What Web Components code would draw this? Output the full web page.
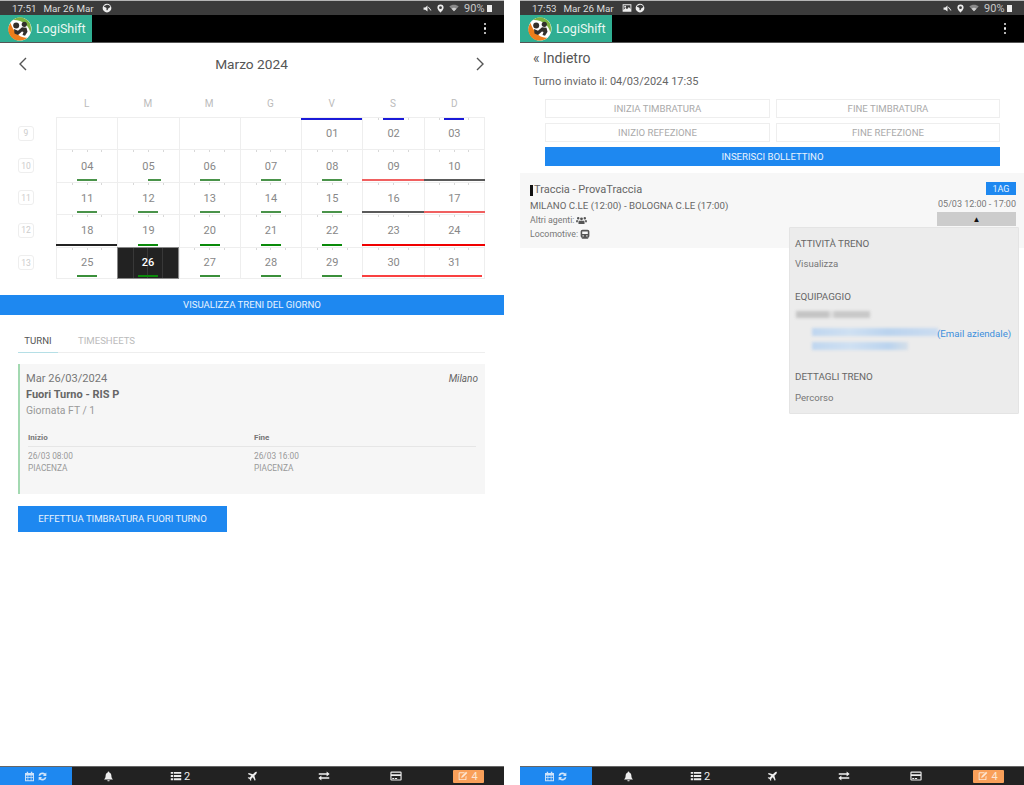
<!DOCTYPE html>
<html lang="it">
<head>
<meta charset="utf-8">
<title>LogiShift</title>
<style>
  html, body { margin: 0; height: 785px; overflow: hidden; background: #fff; }
  body { display: flex; gap: 16px; font-family: Roboto, "Liberation Sans", sans-serif; }
</style>
</head>
<body>
<tablet-screen time="17:51" date="Mar 26 Mar" style="--w:504px">
  <month-calendar></month-calendar>
  <wide-button kind="primary" style="--h:20px">VISUALIZZA TRENI DEL GIORNO</wide-button>
  <shift-tabs></shift-tabs>
  <shift-card></shift-card>
  <wide-button kind="primary" style="--h:26px;width:209px;margin:12px 0 0 18px">EFFETTUA TIMBRATURA FUORI TURNO</wide-button>
</tablet-screen>

<tablet-screen time="17:53" date="Mar 26 Mar" photo style="--w:504px">
  <turn-header></turn-header>
  <train-card>
    <span slot="title">Traccia - ProvaTraccia</span>
    <span slot="route">MILANO C.LE (12:00) - BOLOGNA C.LE (17:00)</span>
    <span slot="when">05/03 12:00 - 17:00</span>
  </train-card>
</tablet-screen>

<script>
const ICONS = {
  calendar: '<path fill-rule="evenodd" d="M4 1h2v2h4V1h2v2h2.5v12h-13V3H4zM3 6.5V9h2.2V6.5zm3.2 0V9h3.6V6.5zm4.6 0V9H13V6.5zM3 10v3.5h2.2V10zm3.2 0v3.5h3.6V10zm4.6 0v3.5H13V10z"/>',
  refresh: '<path d="M8 2.2a5.8 5.8 0 0 1 4 1.6l1.6-1.6v5h-5l1.7-1.7A3.4 3.4 0 0 0 4.7 7H2.3A5.8 5.8 0 0 1 8 2.2zM2.4 8.8h5l-1.7 1.7A3.4 3.4 0 0 0 11.3 9h2.4A5.8 5.8 0 0 1 4 12.2l-1.6 1.6z"/>',
  bell: '<path d="M8 .8a1.2 1.2 0 0 0-1.1 1.4C4.8 2.7 3.8 4.6 3.8 7c0 3-1 4.2-2.3 5.4h13C13.2 11.2 12.2 10 12.2 7c0-2.4-1-4.3-3.1-4.8A1.2 1.2 0 0 0 8 .8zM6.3 13.3a1.7 1.7 0 0 0 3.4 0z"/>',
  list: '<path d="M1 2.5h3V5H1zm4 0h10V5H5zM1 6.8h3v2.5H1zm4 0h10v2.5H5zM1 11h3v2.5H1zm4 0h10v2.5H5z"/>',
  plane: '<path d="M14.5 1.5c-1-.8-2.6 0-3.6 1L8.6 4.8 2.5 3 1.3 4.2l5 2.8-2.4 2.6-2-.4-.9.9 2.7 1.7 1.7 2.7.9-.9-.4-2 2.6-2.4 2.8 5 1.2-1.2-1.8-6.1 2.3-2.3c1-1 1.8-2.6 1-3.6z"/>',
  exchange: '<path d="M1 4.2h10.5V2l4 3.3-4 3.3V6.3H1zM15 9.7H4.5V7.4l-4 3.3 4 3.3v-2.2H15z"/>',
  card: '<path fill-rule="evenodd" d="M2 2h12a1.5 1.5 0 0 1 1.5 1.5v9A1.5 1.5 0 0 1 14 14H2a1.5 1.5 0 0 1-1.5-1.5v-9A1.5 1.5 0 0 1 2 2zm0 1.5v2h12v-2zM2 8v4.5h12V8zm1 2.8h2.5V12H3zm3.5 0h3V12h-3z"/>',
  edit: '<path fill-rule="evenodd" d="M3 2h8L9.5 3.5H3a.5.5 0 0 0-.5.5v8.500a.5.5 0 0 0 .5.5h8.500a.5.5 0 0 0 .5-.5V9l1.500-1.500V13a1.500 1.500 0 0 1-1.500 1.500H3A1.500 1.500 0 0 1 1 13V4a2 2 0 0 1 2-2zM13 1l2 2-7 7-3 1 1-3z"/>',
  users: '<path d="M8 3.5a2.1 2.1 0 1 1 0 4.2 2.1 2.1 0 0 1 0-4.2zM3.2 3a1.8 1.8 0 1 1 0 3.6 1.8 1.8 0 0 1 0-3.6zm9.6 0a1.8 1.8 0 1 1 0 3.6 1.8 1.8 0 0 1 0-3.6zM5 8.3h6c.9 0 1.4.8 1.4 1.7v3H3.6v-3c0-.9.5-1.7 1.4-1.7zM.2 7.5h3.200c-.5.6-.8 1.400-.8 2.300v.7H.2zm12.400 0h3.200v3h-2.400v-.7c0-.9-.3-1.700-.8-2.300z"/>',
  train: '<path fill-rule="evenodd" d="M4 1h8a3 3 0 0 1 3 3v7a3 3 0 0 1-3 3l1.5 1.5h-11L4 14a3 3 0 0 1-3-3V4a3 3 0 0 1 3-3zm-.5 3v4h9V4zM4 10v2h2v-2zm6 0v2h2v-2z"/>',
  mute: '<path d="M1 6h3l4-3.5v11L4 10H1zM10 5l5 6-1 1-5-6z"/>',
  pin: '<path fill-rule="evenodd" d="M8 1a5.5 5.5 0 0 1 5.5 5.5C13.5 10 8 15 8 15S2.5 10 2.5 6.5A5.5 5.5 0 0 1 8 1zm0 3a2.5 2.5 0 1 0 0 5 2.5 2.5 0 0 0 0-5z"/>',
  wifi: '<path d="M8 13 .5 5.5C4.5 1.8 11.5 1.8 15.5 5.5z" opacity=".55"/><path d="M8 13 4 9c2.3-2 5.7-2 8 0z"/>',
  photo: '<path fill-rule="evenodd" d="M1 2h14v12H1zm1.5 1.5V11l3-3.5L8 10l3-3.5 2.5 3v-6zM5 4.5a1.5 1.5 0 1 1 0 3 1.500 1.500 0 0 1 0-3z"/>',
  globe: '<path fill-rule="evenodd" d="M8 1a7 7 0 1 1 0 14A7 7 0 0 1 8 1zM3 5c1 2 3 1 4 3s-1 2 1 4c2-.5 1-3 3-4 1-.5 2-1 2.5-2C12 3 9 2 7 3 6 4 4 3.5 3 5z"/>'
};

function icon(name, size, color) {
  return `<svg viewBox="0 0 16 16" width="${size}" height="${size}" fill="${color || 'currentColor'}" style="display:block;flex:none">${ICONS[name]}</svg>`;
}

const LOGO = `<svg viewBox="0 0 24 24" width="24" height="24" style="display:block;flex:none">
  <circle cx="12" cy="12" r="11.5" fill="#fff"/>
  <path d="M2.5 6A11 11 0 0 0 12 23.5c3 0 5.5-1 7.5-3C12 22 5 14 2.5 6z" fill="#ee7d1b"/>
  <path d="M5 3A11 11 0 0 1 23 12c0 1.5-.3 2.5-.8 3.5C21.5 9 14 2.5 5 3z" fill="#7cb342"/>
  <g fill="#33302c"><circle cx="8.2" cy="8.5" r="3"/><circle cx="16.3" cy="7.3" r="2.6"/>
  <path d="M6 12l4 1.8 4-3.6 4.5.5 1 4-2.5 4-2.5-.7 1-3-1.5-.5-4 3.5-3.5-1.5z"/></g>
</svg>`;

class TabletScreen extends HTMLElement {
  constructor() {
    super();
    this.attachShadow({ mode: 'open' });
    const extra = this.hasAttribute('photo') ? icon('photo', 10, '#eee') : '';
    this.shadowRoot.innerHTML = `
<style>
  :host { display: flex; flex-direction: column; width: var(--w); height: 785px; flex: none; color: #555; font-family: Roboto, "Liberation Sans", sans-serif; }
  .status { height: 14px; border-top: 1px solid #b5b5b5; background: #3b3b3b; color: #ddd; font-size: 9.8px; display: flex; align-items: center; padding: 0 12.5px 0 12px; }
  .status .date { margin-left: 7px; }
  .status .left { display: flex; align-items: center; gap: 3px; margin-left: 8px; }
  .status .right { margin-left: auto; display: flex; align-items: center; gap: 4px; }
  .status .pct { font-size: 11px; color: #c8c8c8; margin-left: 1px; }
  .battery { width: 5px; height: 7px; background: #eee; margin-left: -2px; }
  .bar { height: 27px; border-bottom: 1px solid #555; background: #000; display: flex; align-items: stretch; }
  .brand { width: 92px; background: #2fae92; display: flex; align-items: center; gap: 4px; padding-left: 8px; box-sizing: border-box; color: #eaf7f3; font-size: 12.5px; }
  .menu { margin-left: auto; width: 38px; display: flex; flex-direction: column; align-items: center; justify-content: center; gap: 2px; }
  .menu i { width: 2.5px; height: 2.5px; background: #eee; border-radius: 50%; }
  main { flex: 1; min-height: 0; display: flex; flex-direction: column; }
  nav { height: 18px; border-top: 1px solid #666; background: #222; color: #eee; display: grid; grid-template-columns: repeat(7, 72px); }
  nav div { display: flex; align-items: center; justify-content: center; gap: 2px; font-size: 11px; }
  nav .on { background: #1e88f0; color: #cfe4fa; }
  nav .badge { background: #f9a05a; color: #fde6d3; width: 31px; height: 13px; margin: auto; border-radius: 1px; gap: 3px; }
</style>
<div class="status">
  <span>${this.getAttribute('time')}</span><span class="date">${this.getAttribute('date')}</span>
  <span class="left">${extra}${icon('globe', 10, '#eee')}</span>
  <span class="right">${icon('mute', 9, '#eee')}${icon('pin', 9, '#eee')}${icon('wifi', 10, '#ccc')}<span class="pct">90%</span><span class="battery"></span></span>
</div>
<div class="bar">
  <div class="brand">${LOGO}<span>LogiShift</span></div>
  <div class="menu"><i></i><i></i><i></i></div>
</div>
<main><slot></slot></main>
<nav>
  <div class="on">${icon('calendar', 11)}${icon('refresh', 11)}</div>
  <div>${icon('bell', 11)}</div>
  <div>${icon('list', 12)}<span>2</span></div>
  <div>${icon('plane', 11)}</div>
  <div>${icon('exchange', 12)}</div>
  <div>${icon('card', 12)}</div>
  <div><div class="badge">${icon('edit', 10)}<span>4</span></div></div>
</nav>`;
  }
}
customElements.define('tablet-screen', TabletScreen);

class WideButton extends HTMLElement {
  constructor() {
    super();
    this.attachShadow({ mode: 'open' });
    this.shadowRoot.innerHTML = `
<style>
  :host { display: flex; align-items: center; justify-content: center; box-sizing: border-box; height: var(--h, 19px); font-size: 9.6px; }
  :host([kind="primary"]) { background: #1e88f0; color: #e8f3fe; }
  :host([kind="ghost"]) { background: #fff; border: 1px solid #eee; color: #aaa; }
</style>
<slot></slot>`;
  }
}
customElements.define('wide-button', WideButton);

const G1 = '#4a934a', G2 = '#0a8a0a', G3 = '#3a8f3a';
const R1 = '#f06060', R2 = '#f00000', R3 = '#f94040', K1 = '#5a5a5a', K2 = '#222', B = '#1a1ad8';
// day, bar colour, bar span (third = middle third, half = right half, full = whole cell)
const WEEKS = [
  [9, [null, null, null, null, ['01', B, 'full', 'top'], ['02', B, 'third', 'top'], ['03', B, 'third', 'top']]],
  [10, [['04', G1, 'third'], ['05', G1, 'half'], ['06', G1, 'third'], ['07', G1, 'third'], ['08', G1, 'third'], ['09', R1, 'full'], ['10', K1, 'full']]],
  [11, [['11', G1, 'third'], ['12', G1, 'third'], ['13', G1, 'third'], ['14', G1, 'third'], ['15', G1, 'third'], ['16', K1, 'full'], ['17', R1, 'full']]],
  [12, [['18', K2, 'full'], ['19', G2, 'third'], ['20', G2, 'third'], ['21', G2, 'third'], ['22', G2, 'third'], ['23', R2, 'full'], ['24', R2, 'full']]],
  [13, [['25', G3, 'third'], ['26', G2, 'third'], ['27', G3, 'third'], ['28', G3, 'third'], ['29', G3, 'third'], ['30', R3, 'full'], ['31', R3, 'almost']]]
];

class MonthCalendar extends HTMLElement {
  constructor() {
    super();
    this.attachShadow({ mode: 'open' });
    const heads = ['L', 'M', 'M', 'G', 'V', 'S', 'D'].map((d, i) => `<div class="head" style="grid-area:1/${i + 2}">${d}</div>`).join('');
    const rows = WEEKS.map(([week, days], r) => {
      const cells = days.map((d, c) => {
        const edge = (c === 6 ? ' last-col' : '') + (r === 4 ? ' last-row' : '');
        const area = `grid-area:${r + 3}/${c + 2}`;
        if (!d) return `<div class="cell${edge}" style="${area}"></div>`;
        const [num, color, span, pos] = d;
        return `<div class="cell day${num === '26' ? ' today' : ''}${edge}" style="${area}">${num}<i class="${span} ${pos || 'bottom'}" style="background:${color}"></i></div>`;
      }).join('');
      return `<div class="week" style="grid-area:${r + 3}/1"><span>${week}</span></div>${cells}`;
    }).join('');
    this.shadowRoot.innerHTML = `
<style>
  :host { display: block; padding: 9px 19px 16px 18px; }
  .title { height: 24px; display: flex; align-items: center; justify-content: space-between; font-size: 13.7px; color: #555; margin-bottom: 16px; }
  .title svg { display: block; }
  .grid { display: grid; grid-template-columns: 38px repeat(7, 1fr); grid-template-rows: 22px 3px repeat(5, 32.4px); }
  .head { display: flex; align-items: center; justify-content: center; font-size: 10px; color: #bbb; }
  .week { display: flex; align-items: center; }
  .week span { width: 16px; height: 15px; box-sizing: border-box; border: 1px solid #eee; border-radius: 3px; display: flex; align-items: center; justify-content: center; font-size: 8.5px; color: #ccc; }
  .cell { position: relative; box-sizing: border-box; border-top: 1px solid #eee; border-left: 1px solid #eee; display: flex; align-items: center; justify-content: center; font-size: 11px; color: #888; }
  .last-col { border-right: 1px solid #eee; }
  .last-row { border-bottom: 1px solid #eee; }
  .day { background:
    linear-gradient(#d8d8d8, #d8d8d8) 25% 0 / 1px 2px no-repeat,
    linear-gradient(#d8d8d8, #d8d8d8) 50% 0 / 1px 2px no-repeat,
    linear-gradient(#d8d8d8, #d8d8d8) 75% 0 / 1px 2px no-repeat; }
  .today { color: #fff; font-weight: 500; border: 1px solid #888; background:
    linear-gradient(#383838, #383838) 25% 0 / 1px 100% no-repeat,
    linear-gradient(#383838, #383838) 50% 0 / 1px 100% no-repeat,
    linear-gradient(#383838, #383838) 75% 0 / 1px 100% no-repeat, #222; }
  i { position: absolute; height: 2px; }
  .bottom { bottom: 1px; }
  .top { top: 0; }
  .third { left: 33.3%; width: 33.3%; }
  .half { left: 50%; width: 21%; }
  .full { left: -1px; right: -1px; }
  .almost { left: -1px; right: 2px; }
</style>
<div class="title">
  <svg width="10" height="14" viewBox="0 0 10 14" fill="none" stroke="#555" stroke-width="1.4"><path d="M8 1 2 7l6 6"/></svg>
  <span>Marzo 2024</span>
  <svg width="10" height="14" viewBox="0 0 10 14" fill="none" stroke="#555" stroke-width="1.4"><path d="m2 1 6 6-6 6"/></svg>
</div>
<div class="grid">${heads}${rows}</div>`;
  }
}
customElements.define('month-calendar', MonthCalendar);

class ShiftTabs extends HTMLElement {
  constructor() {
    super();
    this.attachShadow({ mode: 'open' });
    this.shadowRoot.innerHTML = `
<style>
  :host { display: flex; height: 19px; margin: 18px 19px 0 18px; border-bottom: 1px solid #eee; font-size: 9.6px; color: #bbb; }
  span { display: flex; align-items: center; height: 19px; box-sizing: border-box; padding-bottom: 3px; }
  .on { width: 40px; justify-content: center; color: #555; border-bottom: 1px solid #b5dfe6; margin-bottom: -1px; height: 20px; }
  .off { margin-left: 20px; }
</style>
<span class="on">TURNI</span><span class="off">TIMESHEETS</span>`;
  }
}
customElements.define('shift-tabs', ShiftTabs);

class ShiftCard extends HTMLElement {
  constructor() {
    super();
    this.attachShadow({ mode: 'open' });
    this.shadowRoot.innerHTML = `
<style>
  :host { display: block; box-sizing: border-box; height: 130px; margin: 11px 19px 0 18px; padding: 8px 7px 0 6px; background: #f6f6f6; border-left: 2px solid #a3d9b1; color: #777; }
  .top { display: flex; justify-content: space-between; font-size: 11.1px; line-height: 14px; }
  .top em { font-size: 10px; color: #666; }
  h3 { margin: 2px 0; font-size: 11px; line-height: 14px; font-weight: 700; color: #666; }
  p { margin: 0; font-size: 10.4px; line-height: 14px; color: #999; }
  .table { display: grid; grid-template-columns: 226px 1fr; margin: 13px 2px 0 2px; }
  .th { font-size: 8px; font-weight: 700; color: #777; line-height: 14px; border-bottom: 1px solid #e6e6e6; padding-bottom: 1px; }
  .td { font-size: 8.3px; line-height: 12px; color: #999; padding-top: 3px; }
</style>
<div class="top"><span>Mar 26/03/2024</span><em>Milano</em></div>
<h3>Fuori Turno - RIS P</h3>
<p>Giornata FT / 1</p>
<div class="table">
  <div class="th">Inizio</div><div class="th">Fine</div>
  <div class="td">26/03 08:00<br>PIACENZA</div><div class="td">26/03 16:00<br>PIACENZA</div>
</div>`;
  }
}
customElements.define('shift-card', ShiftCard);

class TurnHeader extends HTMLElement {
  constructor() {
    super();
    this.attachShadow({ mode: 'open' });
    this.shadowRoot.innerHTML = `
<style>
  :host { display: block; padding: 6px 24px 7px 13px; color: #555; }
  .back { font-size: 14px; line-height: 18px; }
  .sent { font-size: 11px; line-height: 14px; margin: 8px 0 10px; color: #666; }
  .grid { display: grid; grid-template-columns: 225px 224px; justify-content: end; gap: 5px 6px; }
  .wide { grid-column: 1 / -1; }
</style>
<div class="back">« Indietro</div>
<div class="sent">Turno inviato il: 04/03/2024 17:35</div>
<div class="grid">
  <wide-button kind="ghost">INIZIA TIMBRATURA</wide-button>
  <wide-button kind="ghost">FINE TIMBRATURA</wide-button>
  <wide-button kind="ghost">INIZIO REFEZIONE</wide-button>
  <wide-button kind="ghost">FINE REFEZIONE</wide-button>
  <wide-button kind="primary" class="wide">INSERISCI BOLLETTINO</wide-button>
</div>`;
  }
}
customElements.define('turn-header', TurnHeader);

class TrainCard extends HTMLElement {
  constructor() {
    super();
    this.attachShadow({ mode: 'open' });
    this.shadowRoot.innerHTML = `
<style>
  :host { display: flex; position: relative; box-sizing: border-box; height: 75px; background: #f7f7f7; padding: 9px 8px 0 10px; color: #666; justify-content: space-between; }
  .title { display: flex; align-items: center; font-size: 11px; line-height: 14px; color: #666; margin-top: 1px; }
  .title::before { content: ""; width: 3px; height: 11px; background: #111; margin-right: 1px; }
  .route { font-size: 9.7px; line-height: 14px; margin-top: 2px; }
  .meta { display: flex; align-items: center; gap: 2px; font-size: 8.8px; height: 14px; color: #777; }
  .side { display: flex; flex-direction: column; align-items: flex-end; }
  .badge { width: 30px; height: 13px; background: #1e88f0; color: #e8f3fe; font-size: 9px; display: flex; align-items: center; justify-content: center; }
  .when { font-size: 9px; line-height: 12px; margin-top: 3px; color: #777; }
  .toggle { width: 79px; height: 14px; background: #ccc; color: #111; font-size: 8px; display: flex; align-items: center; justify-content: center; margin-top: 2px; }
  .drop { position: absolute; left: 269px; top: 54px; width: 230px; height: 187px; box-sizing: border-box; background: #ececec; border: 1px solid #e4e4e4; border-radius: 1px; padding: 0 5px; font-size: 9.6px; color: #777; }
  .drop h4 { margin: 0; position: absolute; font-weight: 400; font-size: 9.8px; line-height: 12px; color: #666; }
  .drop span { position: absolute; line-height: 12px; }
  .blur { position: absolute; filter: blur(1.6px); }
  a { position: absolute; color: #3d8fdc; font-size: 9.7px; line-height: 12px; }
</style>
<div>
  <div class="title"><slot name="title"></slot></div>
  <div class="route"><slot name="route"></slot></div>
  <div class="meta">Altri agenti: ${icon('users', 11, '#555')}</div>
  <div class="meta">Locomotive: ${icon('train', 10, '#555')}</div>
</div>
<div class="side">
  <div class="badge">1AG</div>
  <div class="when"><slot name="when"></slot></div>
  <div class="toggle">▲</div>
</div>
<div class="drop">
  <h4 style="top:10px">ATTIVITÀ TRENO</h4>
  <span style="top:30px">Visualizza</span>
  <h4 style="top:63px">EQUIPAGGIO</h4>
  <div class="blur" style="left:6px;top:83px;width:74px;height:7px;background:linear-gradient(90deg,#c4c4c4 0 45%,#dcdcdc 45% 52%,#c8c8c8 52%)"></div>
  <div class="blur" style="left:22px;top:100px;width:126px;height:8px;background:linear-gradient(90deg,#bfd6ef,#cfe0f2 30%,#bad3ee 60%,#cbdcf0)"></div>
  <div class="blur" style="left:22px;top:114px;width:96px;height:8px;background:linear-gradient(90deg,#bfd6ef,#cfe0f2 40%,#bad3ee 80%,#d5dfe9)"></div>
  <a style="left:147px;top:100px">(Email aziendale)</a>
  <h4 style="top:143px">DETTAGLI TRENO</h4>
  <span style="top:164px">Percorso</span>
</div>`;
  }
}
customElements.define('train-card', TrainCard);
</script>
</body>
</html>
